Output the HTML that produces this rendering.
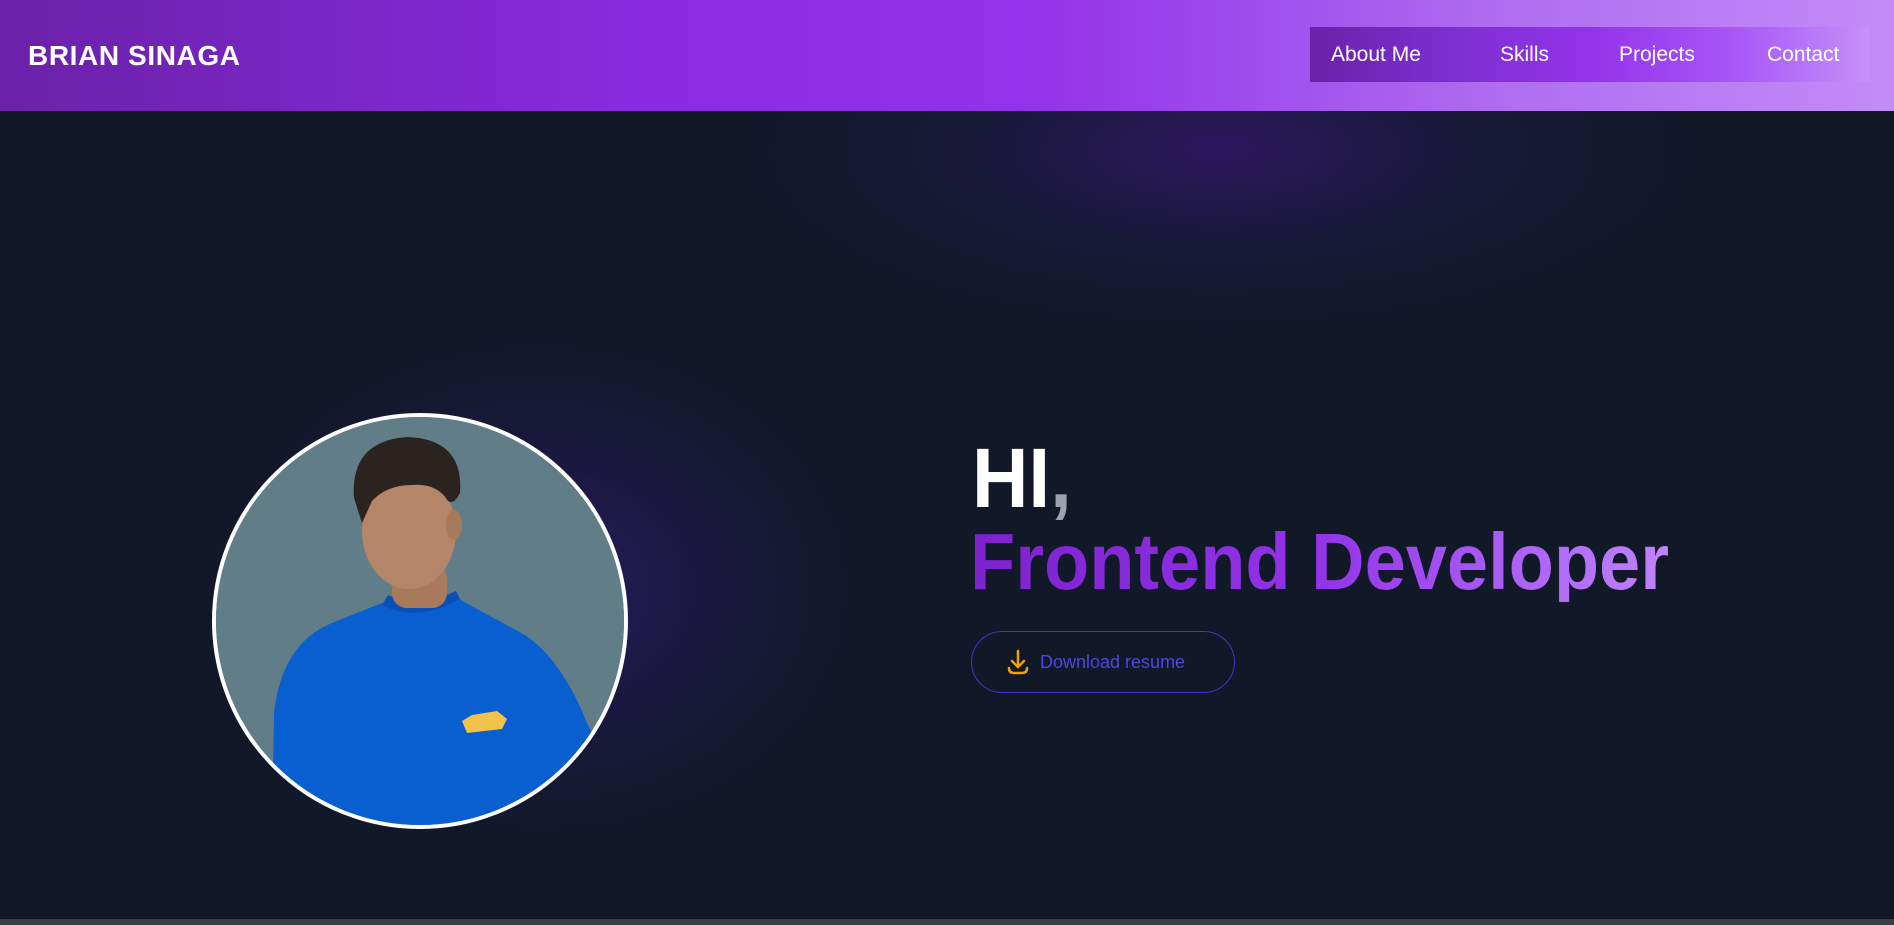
<!DOCTYPE html>
<html><head><meta charset="utf-8">
<style>
*{margin:0;padding:0;box-sizing:border-box}
html,body{width:1894px;height:925px;overflow:hidden;background:#111827;font-family:"Liberation Sans",sans-serif;position:relative}
.hdr{position:absolute;left:0;top:0;width:1894px;height:111px;z-index:5;background:linear-gradient(90deg,#6b21a8 0%,#8a2be2 35%,#9333ea 55%,#b06ef0 80%,#c28cf8 100%)}
.logo{position:absolute;left:28px;top:40px;color:#fff;font-weight:bold;font-size:28px;letter-spacing:0.6px}
.nav{position:absolute;left:1310px;top:27px;width:560px;height:55px;background:linear-gradient(90deg,#6b21a8 0%,#7e2fd0 25%,#9333ea 50%,#a855f7 75%,rgba(200,150,250,0.6) 100%);color:#fff;font-size:21px}
.nav span{position:absolute;top:16px}
.glow1{position:absolute;left:0;top:300px;width:1000px;height:600px;background:radial-gradient(ellipse 330px 260px at 54% 48%,rgba(45,28,110,0.8) 0%,rgba(38,25,90,0.45) 50%,rgba(17,24,39,0) 100%)}
.glow2{position:absolute;left:0;top:0;width:1894px;height:500px;background:radial-gradient(ellipse 500px 190px at 1220px 150px,rgba(48,24,105,0.85) 0%,rgba(35,25,80,0.4) 50%,rgba(17,24,39,0) 100%)}
.photo{position:absolute;left:212px;top:413px;width:416px;height:416px;border-radius:50%;border:4px solid #fff;overflow:hidden;background:#607d88}
.hi{position:absolute;left:972px;top:436px;font-size:84px;font-weight:bold;color:#fff;line-height:1;transform:scaleX(0.93);transform-origin:left}
.hi b{color:#9ca3af}
.role{position:absolute;left:970px;top:522px;font-size:80px;font-weight:bold;line-height:1;background:linear-gradient(90deg,#7e22ce,#9333ea 50%,#c084fc);-webkit-background-clip:text;background-clip:text;color:transparent;transform:scaleX(0.925);transform-origin:left;white-space:nowrap}
.btn{position:absolute;left:971px;top:631px;width:264px;height:62px;border:1.5px solid #4338ca;border-radius:31px;color:#4f46e5;font-size:18px}
.btn span{position:absolute;left:68px;top:20px}
.btn svg{position:absolute;left:34px;top:17px}
.bot{position:absolute;left:0;top:919px;width:1894px;height:6px;background:#3a3d44}
</style></head><body>
<div class="hdr"><div class="logo">BRIAN SINAGA</div>
<div class="nav"><span style="left:21px">About Me</span><span style="left:190px">Skills</span><span style="left:309px">Projects</span><span style="left:457px">Contact</span></div></div>
<div class="glow2"></div>
<div class="glow1"></div>
<div class="photo">
<svg width="408" height="408" viewBox="4 4 408 408">
<rect x="0" y="0" width="416" height="416" fill="#607d88"/>
<path d="M60 420 L62 300 Q70 230 120 210 L170 190 Q205 200 245 185 L300 215 Q345 235 375 310 L390 340 L360 350 L350 420 Z" fill="#0a5fd0"/>
<path d="M170 192 Q205 210 248 186 L244 178 Q205 196 176 182 Z" fill="#0850b8"/>
<rect x="180" y="150" width="55" height="45" rx="15" fill="#a87a5c"/>
<ellipse cx="197" cy="118" rx="47" ry="58" fill="#b5856a"/>
<path d="M142 85 Q138 28 195 24 Q252 26 248 80 Q242 92 236 88 Q225 70 200 72 Q175 72 160 88 L150 110 Z" fill="#2b2320"/>
<ellipse cx="242" cy="112" rx="8" ry="15" fill="#a87a5c"/>
<path d="M250 308 l10 -6 l25 -4 l10 8 l-5 10 l-35 4 Z" fill="#f2c24a"/>
</svg></div>
<div class="hi">HI<b>,</b></div>
<div class="role">Frontend Developer</div>
<div class="btn"><svg width="24" height="28" viewBox="0 0 24 28" fill="none" stroke="#f59e0b" stroke-width="2.5" stroke-linecap="round"><path d="M12 2 V17 M6 12 L12 18 L18 12"/><path d="M3 19 Q3 24 8 24 H16 Q21 24 21 19"/></svg><span>Download resume</span></div>
<div class="bot"></div>
</body></html>
